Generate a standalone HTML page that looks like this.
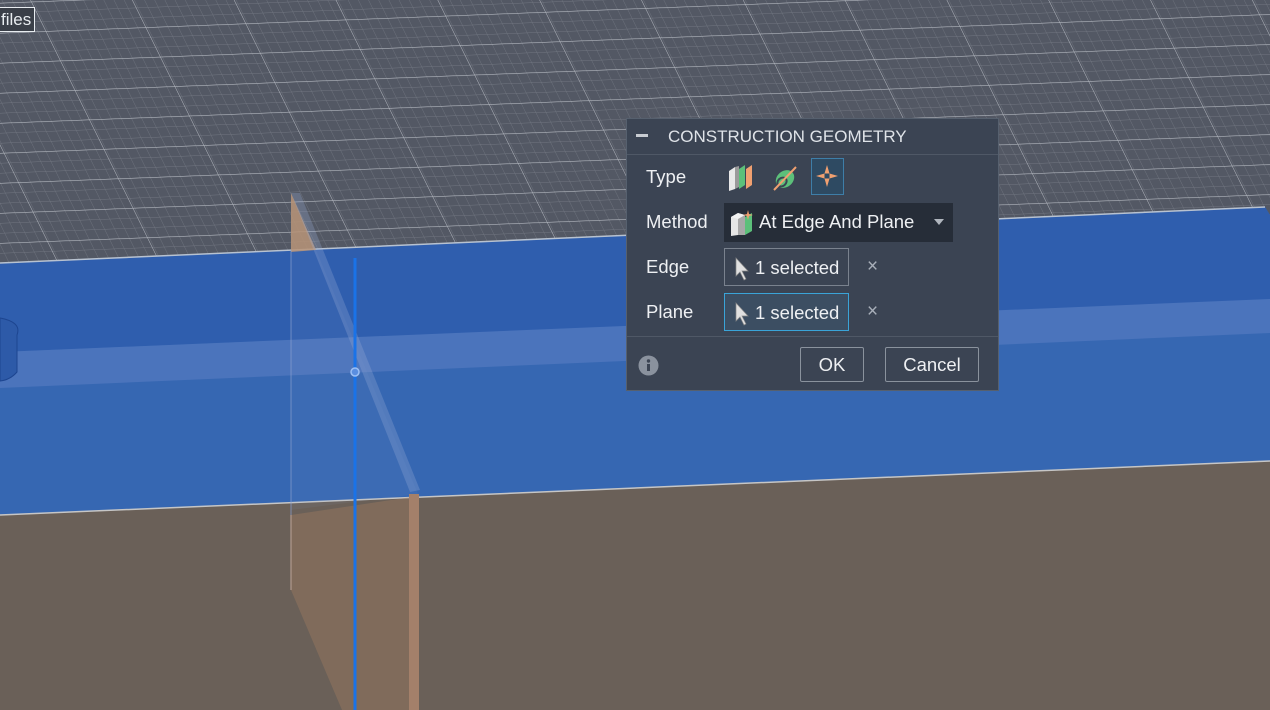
<!DOCTYPE html>
<html><head><meta charset="utf-8">
<style>
html,body{margin:0;padding:0;width:1270px;height:710px;overflow:hidden;background:#5a5f6a;font-family:"Liberation Sans","DejaVu Sans",sans-serif;}
#scene{position:absolute;left:0;top:0;}
.files{position:absolute;left:-2px;top:7px;width:37px;height:25px;border:1px solid #e8ecf0;background:#3a3f48;color:#e8ecf0;font-size:17px;line-height:24px;padding-left:2px;box-sizing:border-box;}
.dlg{position:absolute;left:626px;top:118px;width:373px;height:273px;background:#3b4453;border:1px solid #56606e;box-sizing:border-box;color:#eef0f3;font-size:18.5px;}
.hdr{height:35px;border-bottom:1px solid #4f5866;position:relative;}
.hdr .min{position:absolute;left:9px;top:15px;width:12px;height:3px;background:#c8ccd2;}
.hdr .t{position:absolute;left:41px;top:8px;font-size:17px;letter-spacing:0px;color:#dfe3e8;}
.lbl{position:absolute;left:19px;}
.ic{position:absolute;}
.sel{position:absolute;left:97px;width:125px;height:38px;border:1px solid #7a828e;box-sizing:border-box;background:#3b4453;}
.sel span{position:absolute;left:30px;top:8px;}
.sel svg{position:absolute;left:10px;top:8px;}
.x{position:absolute;left:240px;color:#a9b0ba;font-size:19px;}
.btn{position:absolute;top:228px;height:35px;border:1px solid #8a929d;box-sizing:border-box;border-radius:2px;text-align:center;line-height:33px;}
</style></head><body>
<svg id="scene" width="1270" height="710" viewBox="0 0 1270 710">
<defs>
<pattern id="minor" width="10" height="10" patternUnits="userSpaceOnUse" patternTransform="skewX(24)">
<path d="M0 0H10M0 0V10" stroke="#7e838d" stroke-width="0.8" fill="none"/>
</pattern>
<pattern id="major" width="100" height="30" patternUnits="userSpaceOnUse" patternTransform="skewX(24) translate(48 10)">
<path d="M0 0H100M0 0V30" stroke="#c4c8cf" stroke-width="1.1" fill="none"/>
</pattern>
</defs>
<rect width="1270" height="710" fill="#535864"/>
<g transform="rotate(-2.2 600 200)">
<rect x="-300" y="-100" width="1900" height="500" fill="url(#minor)" opacity="0.75"/>
<rect x="-300" y="-100" width="1900" height="500" fill="url(#major)" opacity="0.85"/>
</g>
<polygon points="0,515 1270,460 1270,710 0,710" fill="#6a6058"/>
<polygon points="0,263 1265,207 1270,215 1270,461 0,515" fill="#3667b2"/>
<polygon points="0,263 1265,207 1270,215 1270,300 0,352" fill="#2f5eae"/>
<polygon points="0,352 1270,299 1270,333 0,388" fill="#4b74bc"/>
<line x1="0" y1="263" x2="1265" y2="207" stroke="#b8c2d0" stroke-width="1.5"/>
<line x1="0" y1="515" x2="1270" y2="461" stroke="#c6c6c6" stroke-width="1.5"/>
<path d="M0,318 Q22,322 17,335 L17,372 Q10,380 0,381 Z" fill="#2d5aa8" stroke="#1d4590" stroke-width="1"/>
<polygon points="291,193 316,250 291,252" fill="#b89478" opacity="0.85"/>
<polygon points="291,252 316,250 418,494 291,510" fill="#8aa0d0" opacity="0.08"/>
<polygon points="291,515 418,496 418,710 342,710 291,590" fill="#a88060" opacity="0.35"/>
<line x1="291" y1="250" x2="291" y2="590" stroke="#8aa0d0" stroke-width="2" opacity="0.35"/>
<line x1="291" y1="515" x2="291" y2="590" stroke="#b59070" stroke-width="2" opacity="0.5"/>
<polygon points="291,193 300,193 420,490 410,492" fill="#9db0d8" opacity="0.28"/>
<rect x="409" y="494" width="10" height="216" fill="#a4806a"/>
<line x1="355" y1="258" x2="355" y2="710" stroke="#1a73e8" stroke-width="3"/>
<circle cx="355" cy="372" r="4" fill="#5a8ee0" stroke="#9cc0f5" stroke-width="1.5"/>
</svg>
<div class="files">files</div>
<div class="dlg">
 <div class="hdr"><div class="min"></div><div class="t">CONSTRUCTION GEOMETRY</div></div>
 <div class="lbl" style="top:47px">Type</div>
 <svg class="ic" style="left:100px;top:44px" width="28" height="30" viewBox="0 0 28 30">
  <polygon points="2,8 8,4 8,26 2,28" fill="#e8e8e8"/><polygon points="8,4 12,3 12,24 8,26" fill="#9a9a9a"/>
  <polygon points="12,6 18,2 18,22 12,26" fill="#5cc07a"/><polygon points="19,6 25,2 25,22 19,26" fill="#f0a070"/>
 </svg>
 <svg class="ic" style="left:143px;top:44px" width="30" height="30" viewBox="0 0 30 30">
  <ellipse cx="15" cy="16" rx="10" ry="8" transform="rotate(-40 15 16)" fill="#5cc07a"/>
  <ellipse cx="12" cy="19" rx="6" ry="5" transform="rotate(-40 12 19)" fill="#3b4453"/>
  <ellipse cx="12" cy="19" rx="4" ry="3" transform="rotate(-40 12 19)" fill="#5cc07a"/>
  <line x1="4" y1="27" x2="26" y2="4" stroke="#f0a070" stroke-width="2"/>
 </svg>
 <div class="ic" style="left:184px;top:39px;width:33px;height:37px;background:#2e4a62;border:1px solid #3e7ea8;box-sizing:border-box"></div>
 <svg class="ic" style="left:188px;top:45px" width="24" height="24" viewBox="0 0 24 24">
  <path d="M12 1 L14.5 9.5 L23 12 L14.5 14.5 L12 23 L9.5 14.5 L1 12 L9.5 9.5Z" fill="#f0a070"/>
  <rect x="9.5" y="9.5" width="5" height="5" fill="#2e4a62"/>
 </svg>
 <div class="lbl" style="top:92px">Method</div>
 <div class="ic" style="left:97px;top:84px;width:229px;height:39px;background:#262d38"></div>
 <svg class="ic" style="left:102px;top:90px" width="26" height="28" viewBox="0 0 26 28">
  <polygon points="2,8 9,4 9,26 2,27" fill="#e6e6e6"/><polygon points="9,4 16,6 16,26 9,26" fill="#a8a8a8"/>
  <polygon points="2,8 9,4 16,6 9,10" fill="#f2f2f2"/>
  <polygon points="16,8 23,4 23,22 16,26" fill="#5cc07a"/>
  <path d="M19 1 L20 5 L24 6 L20 7 L19 11 L18 7 L14 6 L18 5Z" fill="#f0a070"/>
 </svg>
 <div class="ic" style="left:132px;top:92px">At Edge And Plane</div>
 <div class="ic" style="left:307px;top:100px;width:0;height:0;border-left:5px solid transparent;border-right:5px solid transparent;border-top:6px solid #b0b6be"></div>
 <div class="lbl" style="top:137px">Edge</div>
 <div class="sel" style="top:129px"><svg width="16" height="24" viewBox="0 0 16 24"><path d="M1 1 L1 19 L5 15 L9 23 L11 22 L7 14 L13 14Z" fill="#e0e0e0" stroke="#888" stroke-width="0.7"/></svg><span>1 selected</span></div>
 <div class="x" style="top:137px">×</div>
 <div class="lbl" style="top:182px">Plane</div>
 <div class="sel" style="top:174px;border-color:#3aa4d8;background:#3c4e62"><svg width="16" height="24" viewBox="0 0 16 24"><path d="M1 1 L1 19 L5 15 L9 23 L11 22 L7 14 L13 14Z" fill="#e0e0e0" stroke="#888" stroke-width="0.7"/></svg><span>1 selected</span></div>
 <div class="x" style="top:182px">×</div>
 <div style="position:absolute;left:0;right:0;top:217px;border-top:1px solid #4f5866"></div>
 <svg class="ic" style="left:11px;top:236px" width="21" height="21" viewBox="0 0 21 21"><circle cx="10.5" cy="10.5" r="10" fill="#8a929e"/><rect x="9" y="9" width="3" height="7" fill="#3b4453"/><circle cx="10.5" cy="6" r="1.7" fill="#3b4453"/></svg>
 <div class="btn" style="left:173px;width:64px">OK</div>
 <div class="btn" style="left:258px;width:94px">Cancel</div>
</div>
</body></html>
